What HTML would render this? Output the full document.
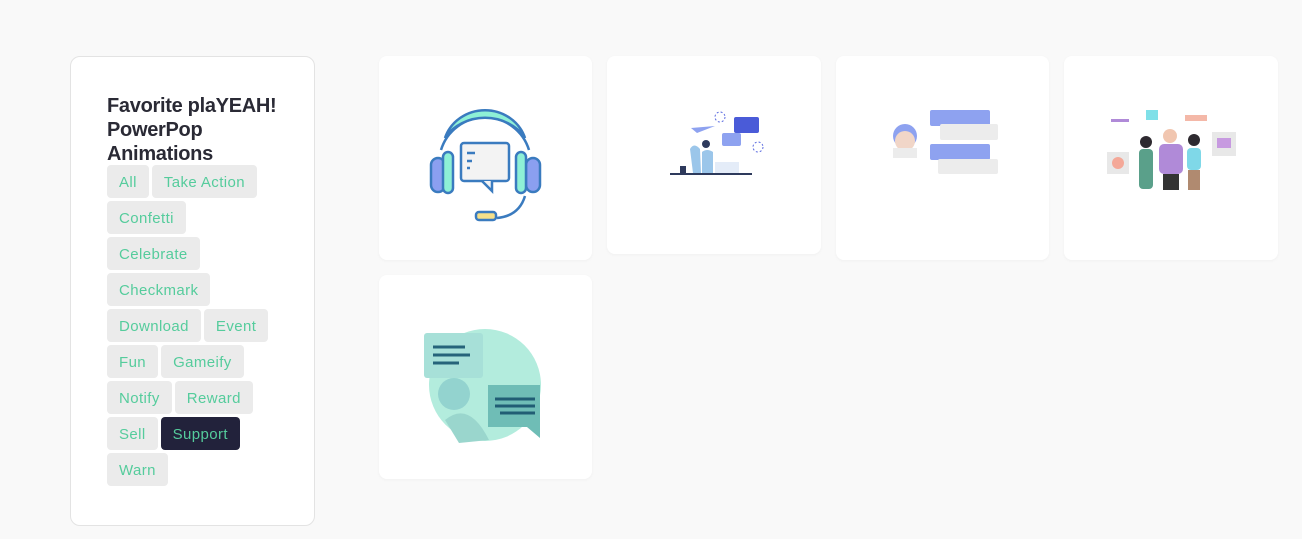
<!DOCTYPE html>
<html><head><style>
body{margin:0;background:#f9f9f9;font-family:"Liberation Sans",sans-serif;width:1302px;height:539px;overflow:hidden;position:relative}
.side{position:absolute;left:70px;top:56px;width:243px;height:468px;background:#fff;border:1px solid #e3e3e3;border-radius:10px}
h1{position:absolute;left:36px;top:37px;margin:0;font-size:20px;line-height:24px;color:#2a2a35;font-weight:bold;letter-spacing:-0.3px}
.tags{position:absolute;left:36px;top:108px;width:180px}
.t{display:inline-block;height:33px;line-height:35px;padding:0 12px;background:#ebebeb;color:#55cc9c;font-size:15px;border-radius:4px;margin:0 0 3px 0;letter-spacing:0.4px}
.row{height:36px;white-space:nowrap}
.row .t+.t{margin-left:3px}
.t.on{background:#22223b}
.c{position:absolute;background:#fff;border-radius:8px;box-shadow:0 1px 3px rgba(0,0,0,.04)}
</style></head><body>
<div class="side">
<h1>Favorite plaYEAH!<br>PowerPop<br>Animations</h1>
<div class="tags">
<div class="row"><span class="t">All</span><span class="t">Take Action</span></div>
<div class="row"><span class="t">Confetti</span></div>
<div class="row"><span class="t">Celebrate</span></div>
<div class="row"><span class="t">Checkmark</span></div>
<div class="row"><span class="t">Download</span><span class="t">Event</span></div>
<div class="row"><span class="t">Fun</span><span class="t">Gameify</span></div>
<div class="row"><span class="t">Notify</span><span class="t">Reward</span></div>
<div class="row"><span class="t">Sell</span><span class="t on">Support</span></div>
<div class="row"><span class="t">Warn</span></div>
</div></div>

<div class="c" style="left:379px;top:56px;width:213px;height:204px">
<svg width="213" height="204" stroke="#3a7bbf" stroke-width="2.5" fill="none">
<path d="M62 94 A46 46 0 0 1 150 94" />
<path d="M66 82 A42 40 0 0 1 146 82 A46 40 0 0 0 66 82Z" fill="#8ef0d6"/>
<rect x="52" y="102" width="14" height="34" rx="7" fill="#8b9ff0"/>
<rect x="64" y="96" width="10" height="41" rx="5" fill="#8ef0d6"/>
<rect x="147" y="102" width="14" height="34" rx="7" fill="#8b9ff0"/>
<rect x="137" y="96" width="10" height="41" rx="5" fill="#8ef0d6"/>
<rect x="82" y="87" width="48" height="38" rx="3" fill="#f3f3f3"/>
<path d="M103 125 L113 135 L113 125" fill="#f3f3f3"/>
<path d="M88 97h8M88 105h5M88 112h3"/>
<path d="M146 140 Q140 160 118 162"/>
<rect x="97" y="156" width="20" height="8" rx="3" fill="#f5e08a"/>
</svg></div>

<div class="c" style="left:607px;top:56px;width:214px;height:198px">
<svg width="214" height="198">
<rect x="63" y="117" width="82" height="2" fill="#2e3a5c"/>
<rect x="127" y="61" width="25" height="16" rx="2" fill="#4a5bd8"/>
<rect x="115" y="77" width="19" height="13" rx="2" fill="#8ea2f0"/>
<path d="M83 93 Q87 86 93 93 L94 117 L86 117Z" fill="#9bc6ea"/>
<circle cx="99" cy="88" r="4" fill="#2e3a5c"/>
<path d="M95 96 Q100 92 106 96 L106 117 L95 117Z" fill="#9bc6ea"/>
<rect x="108" y="106" width="24" height="11" fill="#e4ecf8"/>
<path d="M84 72 L108 70 L90 77Z" fill="#8ea2f0"/>
<circle cx="113" cy="61" r="5" fill="none" stroke="#5a6ae0" stroke-dasharray="2 2"/>
<circle cx="151" cy="91" r="5" fill="none" stroke="#5a6ae0" stroke-dasharray="2 2"/>
<rect x="73" y="110" width="6" height="7" fill="#2e3a5c"/>
</svg></div>

<div class="c" style="left:836px;top:56px;width:213px;height:204px">
<svg width="213" height="204">
<rect x="94" y="54" width="60" height="16" rx="2" fill="#8ea2f0"/>
<rect x="104" y="68" width="58" height="16" rx="2" fill="#ececec"/>
<rect x="94" y="88" width="60" height="16" rx="2" fill="#8ea2f0"/>
<rect x="102" y="103" width="60" height="15" rx="2" fill="#ececec"/>
<circle cx="69" cy="80" r="12" fill="#8ea2f0"/>
<circle cx="69" cy="85" r="10" fill="#f1d6c8"/>
<path d="M57 92 L81 92 L81 102 L57 102Z" fill="#ececec"/>
</svg></div>

<div class="c" style="left:1064px;top:56px;width:214px;height:204px">
<svg width="214" height="204">
<rect x="47" y="63" width="18" height="3" fill="#b08ad8"/>
<rect x="82" y="54" width="12" height="10" fill="#7fe0e8"/>
<rect x="121" y="59" width="22" height="6" fill="#f4b8a8"/>
<rect x="148" y="76" width="24" height="24" fill="#e8e8e8"/>
<rect x="153" y="82" width="14" height="10" fill="#c79ae0"/>
<rect x="43" y="96" width="22" height="22" fill="#e8e8e8"/>
<circle cx="54" cy="107" r="6" fill="#f4a898"/>
<circle cx="82" cy="86" r="6" fill="#2e2a30"/>
<rect x="75" y="93" width="14" height="40" rx="4" fill="#5aa08a"/>
<circle cx="106" cy="80" r="7" fill="#f1c6b0"/>
<rect x="95" y="88" width="24" height="30" rx="5" fill="#b08ad8"/>
<rect x="99" y="118" width="16" height="16" fill="#333"/>
<circle cx="130" cy="84" r="6" fill="#2e2a30"/>
<rect x="123" y="92" width="14" height="22" rx="4" fill="#7fd8e8"/>
<rect x="124" y="114" width="12" height="20" fill="#b08a70"/>
</svg></div>

<div class="c" style="left:379px;top:275px;width:213px;height:204px">
<svg width="213" height="204">
<circle cx="106" cy="110" r="56" fill="#b3ecdd"/>
<path d="M66 145 Q90 125 110 165 L80 168Z" fill="#9ad6cd"/>
<circle cx="75" cy="119" r="16" fill="#93d3cf"/>
<rect x="45" y="58" width="59" height="45" rx="3" fill="#a7e0d8"/>
<path d="M54 72h32M54 80h37M54 88h26" stroke="#26637a" stroke-width="3"/>
<path d="M109 110 L161 110 L161 163 L148 152 L109 152Z" fill="#6fbdb6"/>
<path d="M116 124h40M116 131h40M121 138h35" stroke="#215d74" stroke-width="3"/>
</svg></div>
</body></html>
